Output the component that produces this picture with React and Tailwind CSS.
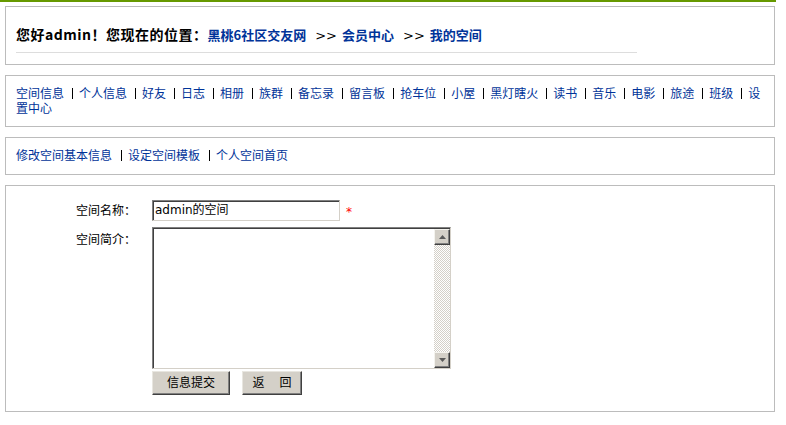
import React, { Fragment } from "react";

const navItems = [
  "空间信息", "个人信息", "好友", "日志", "相册", "族群", "备忘录", "留言板",
  "抢车位", "小屋", "黑灯瞎火", "读书", "音乐", "电影", "旅途", "班级", "设置中心",
];

const subItems = ["修改空间基本信息", "设定空间模板", "个人空间首页"];

function Sep({ wide }) {
  return (
    <span
      className={
        wide
          ? "inline-block w-px h-[11px] bg-black align-[-1px] ml-[9px] mr-[6px]"
          : "inline-block w-px h-[11px] bg-black align-[-1px] ml-[8px] mr-[6px]"
      }
    />
  );
}

function Arrow({ down }) {
  return (
    <svg width="7" height="4" viewBox="0 0 7 4" className="block">
      {down ? (
        <polygon points="0,0 7,0 3.5,4" fill="#5a5a5a" />
      ) : (
        <polygon points="0,4 7,4 3.5,0" fill="#5a5a5a" />
      )}
    </svg>
  );
}

function ScrollButton({ down }) {
  return (
    <div className="h-[16px] w-[16px] flex items-center justify-center bg-[#d4d0c8] border border-t-[#f4f3ee] border-l-[#f4f3ee] border-r-[#404040] border-b-[#404040] shadow-[inset_-1px_-1px_0_#808080]">
      <Arrow down={down} />
    </div>
  );
}

export default function App() {
  return (
    <div className="w-[776px] bg-white font-['DejaVu_Sans','Noto_Sans_CJK_SC',sans-serif] text-black">
      <div className="h-[2px] bg-[#669900]" />

      <div className="flex flex-col gap-[10px] mt-[4px] ml-[5px] w-[770px]">
        {/* breadcrumb */}
        <div className="border border-[#bcbcbc] pt-[17px] pb-[11px] pl-[10px]">
          <div className="w-[621px] border-b border-[#dddddd] pb-[8px]">
            <div className="h-[20px] leading-[20px] whitespace-nowrap font-bold">
              <span className="text-[14px] tracking-[0.5px] font-['Noto_Sans_CJK_SC',sans-serif]">您好admin！您现在的位置：</span>
              <a className="text-[13px] text-[#003399] font-['Noto_Sans_CJK_SC',sans-serif]">黑桃6社区交友网</a>
              <span className="text-[13px] font-normal ml-[9px] mr-[5px]">&gt;&gt;</span>
              <a className="text-[13px] text-[#003399] font-['Noto_Sans_CJK_SC',sans-serif]">会员中心</a>
              <span className="text-[13px] font-normal ml-[9px] mr-[5px]">&gt;&gt;</span>
              <a className="text-[13px] text-[#003399] font-['Noto_Sans_CJK_SC',sans-serif]">我的空间</a>
            </div>
          </div>
        </div>

        {/* main menu */}
        <div className="border border-[#bcbcbc] pt-[11px] pb-[9px] px-[10px]">
          <div className="text-[12px] leading-[15px] text-[#003399]">
            {navItems.map((t, i) => (
              <Fragment key={t}>
                {i > 0 && <Sep />}
                <a>{t}</a>
              </Fragment>
            ))}
          </div>
        </div>

        {/* sub menu */}
        <div className="border border-[#bcbcbc] pt-[11px] pb-[10px] px-[10px]">
          <div className="text-[12px] leading-[15px] text-[#003399] whitespace-nowrap">
            {subItems.map((t, i) => (
              <Fragment key={t}>
                {i > 0 && <Sep wide />}
                <a>{t}</a>
              </Fragment>
            ))}
          </div>
        </div>

        {/* form */}
        <div className="border border-[#bcbcbc] pt-[14px] pb-[16px] pl-[70px]">
          <div className="grid grid-cols-[76px_auto] text-[12px] leading-[15px]">
            <div className="flex items-center pt-[2px]">空间名称：</div>
            <div className="flex items-center">
              <div className="w-[188px] h-[21px] flex items-center pl-[2px] bg-white border border-t-[#808080] border-l-[#808080] border-r-[#d4d0c8] border-b-[#d4d0c8] shadow-[inset_1px_1px_0_#404040]">
                admin的空间
              </div>
              <span className="ml-[6px] text-[#ff0000] self-start mt-[5px]">*</span>
            </div>

            <div className="pt-[6px] mt-[6px]">空间简介：</div>
            <div className="mt-[6px]">
              <div className="w-[299px] h-[142px] flex bg-white border border-t-[#808080] border-l-[#808080] border-r-[#d4d0c8] border-b-[#d4d0c8] shadow-[inset_1px_1px_0_#404040] pt-[1px] pl-[1px]">
                <div className="flex-1" />
                <div className="w-[16px] flex flex-col">
                  <ScrollButton />
                  <div className="flex-1 bg-[repeating-conic-gradient(#d4d0c8_0_25%,#ffffff_0_50%)] bg-[length:2px_2px]" />
                  <ScrollButton down />
                </div>
              </div>
              <div className="flex gap-[12px] mt-[2px]">
                <button className="w-[78px] h-[24px] flex items-center justify-center bg-[#d4d0c8] border border-t-[#e8e6e0] border-l-[#e8e6e0] border-r-[#404040] border-b-[#404040] shadow-[inset_-1px_-1px_0_#808080] text-[12px] text-black">
                  信息提交
                </button>
                <button className="w-[60px] h-[24px] flex items-center justify-center bg-[#d4d0c8] border border-t-[#e8e6e0] border-l-[#e8e6e0] border-r-[#404040] border-b-[#404040] shadow-[inset_-1px_-1px_0_#808080] text-[12px] text-black">
                  <span>返</span>
                  <span className="ml-[15px]">回</span>
                </button>
              </div>
            </div>
          </div>
        </div>
      </div>
    </div>
  );
}
